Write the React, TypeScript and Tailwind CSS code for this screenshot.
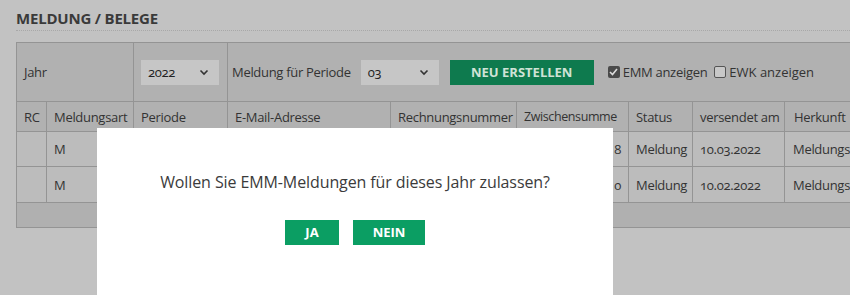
import React from "react";

const Chevron = () => (
  <svg width="10" height="7" viewBox="0 0 10 7" className="shrink-0">
    <path d="M1.5 1.5 L5 5 L8.5 1.5" stroke="#333" strokeWidth="1.6" fill="none" />
  </svg>
);

const Select = ({ value, w }: { value: string; w: string }) => (
  <div className={`flex h-[25px] items-center justify-between bg-[#c6c6c6] pl-[7px] pr-[10px] ${w}`}>
    <span className="oldstyle-nums text-[13px] text-[#222]">{value}</span>
    <Chevron />
  </div>
);

export default function App() {
  const font = { fontFamily: '"Open Sans", "Liberation Sans", sans-serif' };
  const td = "border border-[#949494] px-[7px] text-left font-normal whitespace-nowrap overflow-hidden";
  return (
    <div className="relative h-[295px] w-[850px] overflow-hidden bg-[#c2c2c2] text-[#333]" style={font}>
      <div className="pl-[16px] pt-[9px]">
        <div className="text-[15px] font-bold leading-[18px] tracking-[-0.2px] text-[#3a3a3a]">MELDUNG / BELEGE</div>
        <div className="mt-[3px] border-b border-dotted border-[#a8a8a8]" />
        <table className="mt-[11px] w-[960px] table-fixed border-collapse text-[13px] leading-[18px] tracking-[-0.3px]">
          <colgroup>
            <col className="w-[30px]" />
            <col className="w-[87px]" />
            <col className="w-[94px]" />
            <col className="w-[163px]" />
            <col className="w-[126px]" />
            <col className="w-[112px]" />
            <col className="w-[64px]" />
            <col className="w-[92px]" />
            <col />
          </colgroup>
          <tbody>
            <tr className="h-[59px] bg-[#b1b1b1]">
              <td colSpan={2} className={td}>Jahr</td>
              <td className={td}>
                <Select value="2022" w="w-[78px]" />
              </td>
              <td colSpan={6} className="border border-[#949494] pl-[4px]">
                <div className="flex items-center">
                  <span className="whitespace-nowrap">Meldung für Periode</span>
                  <div className="ml-[10px]">
                    <Select value="03" w="w-[78px]" />
                  </div>
                  <div className="ml-[11px] flex h-[25px] w-[144px] items-center justify-center bg-[#0e7a4e] text-[13px] font-bold tracking-[0px] text-[#cfe3d6]">
                    NEU ERSTELLEN
                  </div>
                  <div className="ml-[14px] flex h-[12px] w-[12px] items-center justify-center rounded-[2px] bg-[#4a4a4a]">
                    <svg width="9" height="8" viewBox="0 0 9 8">
                      <path d="M1 4 L3.5 6.5 L8 1" stroke="#ddd" strokeWidth="1.6" fill="none" />
                    </svg>
                  </div>
                  <span className="ml-[3px] whitespace-nowrap">EMM anzeigen</span>
                  <div className="ml-[7px] h-[12px] w-[12px] rounded-[2px] border border-[#555] bg-[#c8c8c8]" />
                  <span className="ml-[3px] whitespace-nowrap tracking-[0px]">EWK anzeigen</span>
                </div>
              </td>
            </tr>
            <tr className="h-[30px] bg-[#b1b1b1]">
              <td className={td}>RC</td>
              <td className={td}>Meldungsart</td>
              <td className={td}>Periode</td>
              <td className={td}>E-Mail-Adresse</td>
              <td className={td}>Rechnungsnummer</td>
              <td className={`${td} text-[12.5px] tracking-[-0.4px]`}>Zwischensumme</td>
              <td className={td}>Status</td>
              <td className={td}>versendet am</td>
              <td className={`${td} pl-[9px]`}>Herkunft</td>
            </tr>
            <tr className="h-[35px] bg-[#bcbcbc]">
              <td className={td}></td>
              <td className={td}>M</td>
              <td className={td}></td>
              <td className={td}></td>
              <td className={td}></td>
              <td className={`${td} text-right oldstyle-nums`}>8</td>
              <td className={td}>Meldung</td>
              <td className={`${td} oldstyle-nums`}>10.03.2022</td>
              <td className={`${td} pl-[8px]`}>Meldungseingang</td>
            </tr>
            <tr className="h-[36px] bg-[#bcbcbc]">
              <td className={td}></td>
              <td className={td}>M</td>
              <td className={td}></td>
              <td className={td}></td>
              <td className={td}></td>
              <td className={`${td} text-right oldstyle-nums`}>0</td>
              <td className={td}>Meldung</td>
              <td className={`${td} oldstyle-nums`}>10.02.2022</td>
              <td className={`${td} pl-[8px]`}>Meldungseingang</td>
            </tr>
            <tr className="h-[25px] bg-[#b0b0b0]">
              <td colSpan={9} className="border border-[#949494]"></td>
            </tr>
          </tbody>
        </table>
      </div>

      <div className="absolute left-[97px] top-[128px] flex h-[167px] w-[516px] flex-col items-center bg-white">
        <div className="mt-[42px] text-[16px] tracking-[-0.1px] text-[#3b3b3b]">
          Wollen Sie EMM-Meldungen für dieses Jahr zulassen?
        </div>
        <div className="mt-[26px] flex gap-[14px]">
          <div className="flex h-[25px] w-[54px] items-center justify-center bg-[#0b9e63] text-[13px] font-bold text-white">JA</div>
          <div className="flex h-[25px] w-[72px] items-center justify-center bg-[#0b9e63] text-[13px] font-bold text-white">NEIN</div>
        </div>
      </div>
    </div>
  );
}
